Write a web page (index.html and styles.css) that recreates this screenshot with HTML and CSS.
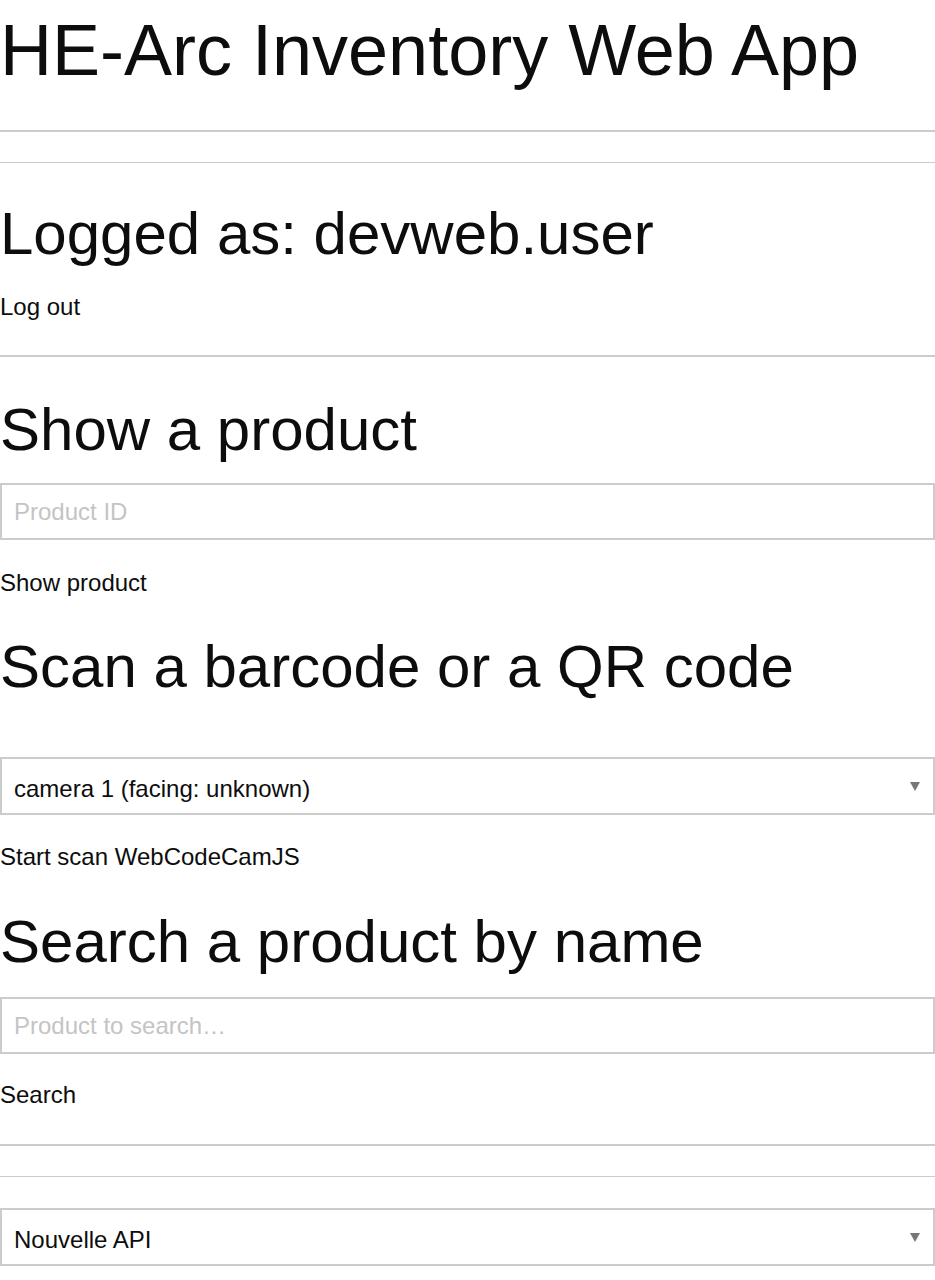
FILE: index.html
```html
<!DOCTYPE html>
<html lang="en">
<head>
<meta charset="utf-8">
<title>HE-Arc Inventory Web App</title>
<link rel="stylesheet" href="styles.css">
</head>
<body>
<div class="page">
  <h1 class="title">HE-Arc Inventory Web App</h1>
  <hr class="rule rule-thick rule-a">
  <hr class="rule rule-thin rule-b">
  <h2 class="heading heading-logged">Logged as: devweb.user</h2>
  <a class="action action-logout">Log out</a>
  <hr class="rule rule-thick rule-c">
  <h2 class="heading heading-show">Show a product</h2>
  <input class="field field-id" type="text" placeholder="Product ID">
  <a class="action action-show">Show product</a>
  <h2 class="heading heading-scan">Scan a barcode or a QR code</h2>
  <div class="select-wrap select-camera">
    <select class="field-select">
      <option>camera 1 (facing: unknown)</option>
    </select>
  </div>
  <a class="action action-scan">Start scan WebCodeCamJS</a>
  <h2 class="heading heading-search">Search a product by name</h2>
  <input class="field field-search" type="text" placeholder="Product to search…">
  <a class="action action-search">Search</a>
  <hr class="rule rule-thick rule-d">
  <hr class="rule rule-thin rule-e">
  <div class="select-wrap select-api">
    <select class="field-select">
      <option>Nouvelle API</option>
    </select>
  </div>
</div>
</body>
</html>
```

FILE: styles.css
```css
html, body {
  margin: 0;
  padding: 0;
  background: #fff;
}

body {
  font-family: "Liberation Sans", Arial, sans-serif;
  color: #0d0d0d;
  width: 935px;
}

.page {
  display: flex;
  flex-direction: column;
}

.title {
  margin: 8px 0 0;
  font-size: 72px;
  line-height: 84px;
  font-weight: normal;
}

.rule {
  margin: 0;
  border: 0;
  width: 100%;
  background: #cccccc;
}

.rule-thick { height: 2px; }
.rule-thin { height: 1px; }

.rule-a { margin-top: 38px; }
.rule-b { margin-top: 30px; }
.rule-c { margin-top: 34px; }
.rule-d { margin-top: 35px; }
.rule-e { margin-top: 30px; }

.heading {
  margin: 0;
  font-size: 60px;
  line-height: 70px;
  font-weight: normal;
}

.heading-logged { margin-top: 36px; }
.heading-show { margin-top: 38px; }
.heading-scan { margin-top: 35px; }
.heading-search { margin-top: 36px; }

.action {
  display: block;
  font-size: 24px;
  line-height: 28px;
  color: #0d0d0d;
  cursor: pointer;
}

.action-logout { margin-top: 24px; }
.action-show { margin-top: 29px; }
.action-scan { margin-top: 28px; }
.action-search { margin-top: 27px; }

.field {
  box-sizing: border-box;
  width: 100%;
  height: 57px;
  margin: 0;
  padding: 0 12px;
  border: 2px solid #cccccc;
  border-radius: 0;
  background: #fff;
  font-family: "Liberation Sans", Arial, sans-serif;
  font-size: 24px;
  color: #0d0d0d;
  outline: none;
}

.field::placeholder {
  color: #c4c4c4;
  opacity: 1;
}

.field-id { margin-top: 18px; }
.field-search { margin-top: 20px; }

.select-wrap {
  position: relative;
  width: 100%;
}

.select-camera { margin-top: 55px; }
.select-api { margin-top: 31px; }

.select-wrap::after {
  content: "";
  position: absolute;
  right: 15px;
  top: 50%;
  margin-top: -4px;
  width: 0;
  height: 0;
  border-left: 5px solid transparent;
  border-right: 5px solid transparent;
  border-top: 9px solid #777777;
  pointer-events: none;
}

.field-select {
  box-sizing: border-box;
  display: block;
  width: 100%;
  height: 58px;
  margin: 0;
  padding: 5px 40px 0 12px;
  border: 2px solid #cccccc;
  border-radius: 0;
  background: #fff;
  -webkit-appearance: none;
  appearance: none;
  font-family: "Liberation Sans", Arial, sans-serif;
  font-size: 24px;
  color: #0d0d0d;
  outline: none;
}
```
